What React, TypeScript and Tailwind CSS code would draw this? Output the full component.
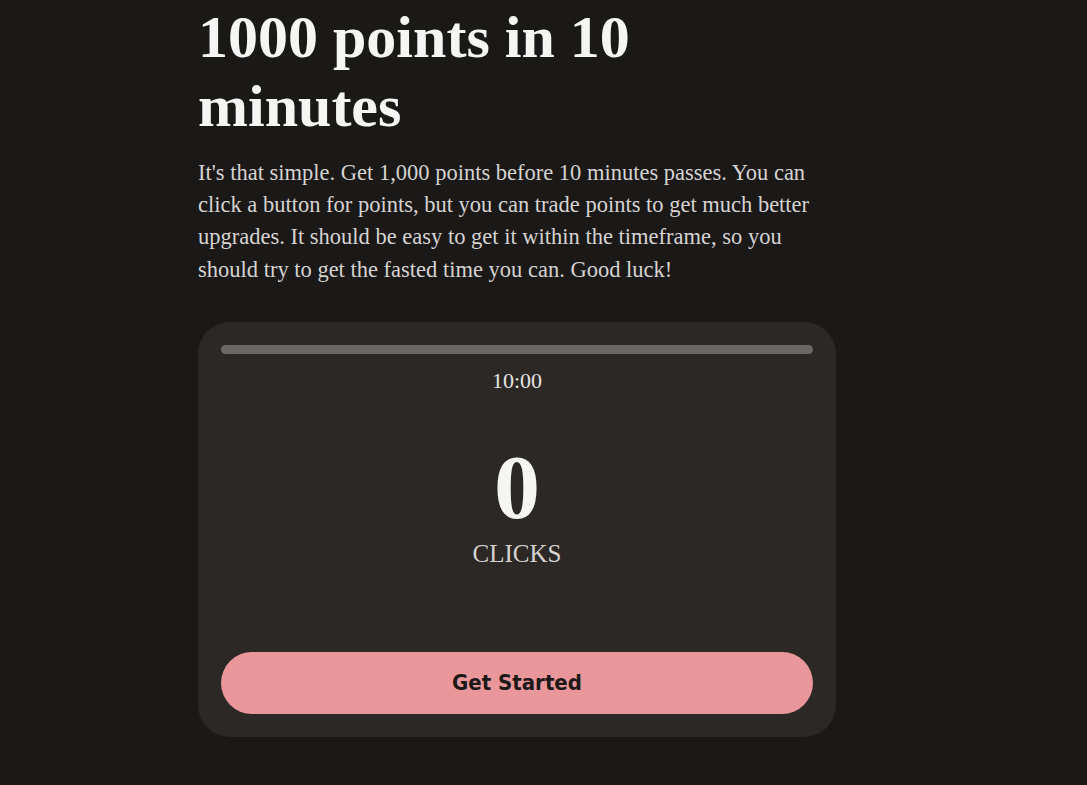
export default function App() {
  return (
    <div className="min-h-[785px] bg-[#1a1918] text-[#f5f5f4]" style={{ fontFamily: '"Liberation Serif", "Times New Roman", serif' }}>
      <div className="ml-[198px] w-[638px] pt-[3px] pb-12">
        <h1 className="text-[60px] font-bold leading-[69px] text-[#f5f5f4]">1000 points in 10 minutes</h1>
        <p className="mt-[16px] text-[22.5px] leading-[32.2px] text-[#d6d3d1]">
          It's that simple. Get 1,000 points before 10 minutes passes. You can click a button for points, but you can trade points to get much better upgrades. It should be easy to get it within the timeframe, so you should try to get the fasted time you can. Good luck!
        </p>

        <div className="mt-[36px] flex flex-col rounded-[32px] bg-[#2c2826] p-[23px]">
          <div className="h-[9px] w-full rounded-full bg-[#6b6966]" />
          <div className="mt-[15px] text-center text-[22px] leading-6 text-[#e7e5e4]">10:00</div>

          <div className="mt-[48px] text-center text-[92px] font-bold leading-none text-[#f5f5f4]">0</div>
          <div className="mt-[5px] text-center text-[25px] leading-8 text-[#d6d3d1]">CLICKS</div>

          <button
            className="mt-[82px] h-[62px] w-full rounded-full bg-[#e9979a] text-[22px] font-bold text-[#1c1917]"
            style={{ fontFamily: '"DejaVu Sans Condensed", "DejaVu Sans", Verdana, sans-serif' }}
          >
            Get Started
          </button>
        </div>
      </div>
    </div>
  );
}
